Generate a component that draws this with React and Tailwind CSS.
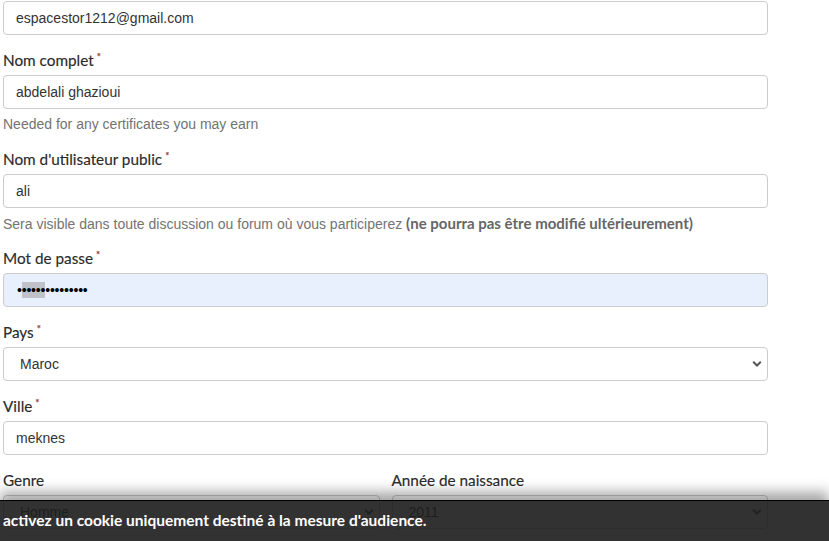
import React from "react";

function Req() {
  return (
    <span className="ml-[3px] text-[10px] leading-[10px] text-[#ee1c25] align-top relative top-[1px]">*</span>
  );
}

function Label({ children, req }) {
  return (
    <div className="h-[20px] overflow-visible text-[15.3px] leading-[20px] mb-[5px] text-[#2b2b2b] font-['Lato',sans-serif] [-webkit-text-stroke:0.15px_#2b2b2b]">
      {children}
      {req && <Req />}
    </div>
  );
}

function Field({ value, bg = "bg-white" }) {
  return (
    <div
      className={`h-[34px] w-full rounded-[4px] border border-[#cccccc] ${bg} flex items-center pl-[12px] text-[14px] text-[#333] font-['Liberation_Sans',Arial,sans-serif]`}
    >
      {value}
    </div>
  );
}

function Chevron({ color = "#555" }) {
  return (
    <svg width="10" height="7" viewBox="0 0 10 7" className="absolute right-[5px] top-1/2 -translate-y-1/2">
      <path d="M1.2 1.3 L5 5 L8.8 1.3" fill="none" stroke={color} strokeWidth="2" />
    </svg>
  );
}

function Select({ value }) {
  return (
    <div className="relative h-[34px] w-full rounded-[4px] border border-[#cccccc] bg-white flex items-center pl-[16px] text-[14px] text-[#333] font-['Liberation_Sans',Arial,sans-serif]">
      {value}
      <Chevron />
    </div>
  );
}

function Help({ children }) {
  return (
    <div className="mt-[5px] h-[20px] text-[14px] leading-[20px] text-[#737373] font-['Liberation_Sans',Arial,sans-serif]">
      {children}
    </div>
  );
}

export default function App() {
  return (
    <div className="relative w-[829px] h-[541px] overflow-hidden bg-white">
      <div className="pl-[3px] pt-[1px] w-[768px]">
        <Field value="espacestor1212@gmail.com" />

        <div className="mt-[15px]">
          <Label req>Nom complet</Label>
          <Field value="abdelali ghazioui" />
          <Help>Needed for any certificates you may earn</Help>
        </div>

        <div className="mt-[15px]">
          <Label req>Nom d'utilisateur public</Label>
          <Field value="ali" />
          <Help>
            Sera visible dans toute discussion ou forum où vous participerez{" "}
            <strong className="font-bold text-[15px] leading-[20px] text-[#666] font-['Lato',sans-serif]">
              (ne pourra pas être modifié ultérieurement)
            </strong>
          </Help>
        </div>

        <div className="mt-[15px]">
          <Label req>Mot de passe</Label>
          <div className="h-[34px] w-full rounded-[4px] border border-[#cccccc] bg-[#e8f0fe] flex items-center pl-[13px] text-[14px] text-black font-['Liberation_Sans',Arial,sans-serif]">
            <span className="tracking-[-0.2px]">•</span>
            <span className="bg-[#bfc3c9] h-[16px] flex items-center tracking-[-0.2px]">•••••</span>
            <span className="tracking-[-0.2px]">•••••••••</span>
          </div>
        </div>

        <div className="mt-[15px]">
          <Label req>Pays</Label>
          <Select value="Maroc" />
        </div>

        <div className="mt-[15px]">
          <Label req>Ville</Label>
          <Field value="meknes" />
        </div>

        <div className="mt-[15px] grid grid-cols-2 gap-x-[12px]">
          <div>
            <Label>Genre</Label>
            <Select value="Homme" />
          </div>
          <div>
            <Label>Année de naissance</Label>
            <Select value="2011" />
          </div>
        </div>
      </div>

      <div className="absolute left-0 right-0 bottom-0 h-[41px] bg-[rgba(28,28,28,0.9)] border-t border-black shadow-[0_-8px_12px_rgba(0,0,0,0.35)] flex items-center pl-[3px]">
        <span className="text-white font-bold text-[15.5px] font-['Lato',sans-serif]">
          activez un cookie uniquement destiné à la mesure d'audience.
        </span>
      </div>
    </div>
  );
}
